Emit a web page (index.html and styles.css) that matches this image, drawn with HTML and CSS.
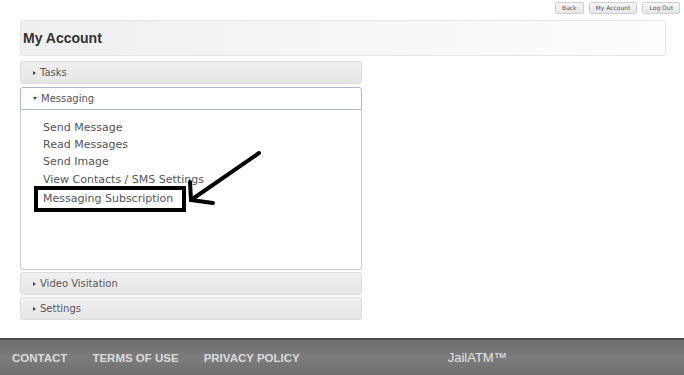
FILE: index.html
```html
<!DOCTYPE html>
<html>
<head>
<meta charset="utf-8">
<link rel="stylesheet" href="styles.css">
</head>
<body>
<div class="page">
  <div class="topbar">
    <button class="tbtn">Back</button>
    <button class="tbtn">My Account</button>
    <button class="tbtn">Log Out</button>
  </div>
  <div class="titlebox"><h1>My Account</h1></div>
  <div class="accordion">
    <div class="acc-head"><span class="tri-r"></span>Tasks</div>
    <div class="acc-head active"><span class="tri-d"></span>Messaging</div>
    <div class="acc-body">
      <a class="link">Send Message</a>
      <a class="link">Read Messages</a>
      <a class="link">Send Image</a>
      <a class="link">View Contacts / SMS Settings</a>
      <a class="link last">Messaging Subscription</a>
      <div class="mark-box"></div>
      <svg class="mark-arrow" width="100" height="80" viewBox="0 0 100 80">
        <line x1="88" y1="8" x2="20" y2="55" stroke="#000" stroke-width="4" stroke-linecap="round"/>
        <line x1="20" y1="55" x2="19" y2="37" stroke="#000" stroke-width="4" stroke-linecap="round"/>
        <line x1="20" y1="55" x2="42" y2="58" stroke="#000" stroke-width="4" stroke-linecap="round"/>
      </svg>
    </div>
    <div class="acc-head"><span class="tri-r"></span>Video Visitation</div>
    <div class="acc-head"><span class="tri-r"></span>Settings</div>
  </div>
  <footer class="footer">
    <a class="flink">CONTACT</a>
    <a class="flink">TERMS OF USE</a>
    <a class="flink">PRIVACY POLICY</a>
    <span class="brand">JailATM™</span>
  </footer>
</div>
</body>
</html>
```

FILE: styles.css
```css
html, body {
  margin: 0;
  padding: 0;
  background: #ffffff;
}
.page {
  display: flex;
  flex-direction: column;
  min-height: 100vh;
  font-family: "DejaVu Sans", Verdana, sans-serif;
}
.topbar {
  display: flex;
  justify-content: flex-end;
  gap: 5px;
  padding: 2px 4px 0 0;
  height: 14px;
}
.tbtn {
  font-family: "DejaVu Sans", sans-serif;
  font-size: 6px;
  color: #555;
  background: linear-gradient(#f6f6f6, #e6e6e6);
  border: 1px solid #cfcfcf;
  border-radius: 2px;
  padding: 0 6px;
  height: 12px;
  line-height: 10px;
}
.titlebox {
  margin: 4px 18px 0 20px;
  height: 36px;
  border: 1px solid #e4e4e4;
  border-radius: 3px;
  background: linear-gradient(90deg, #efefef, #f6f6f6 50%, #fdfdfd);
  display: flex;
  align-items: center;
  padding-left: 2px;
  box-sizing: border-box;
}
.titlebox h1 {
  margin: 0;
  font-family: "Liberation Sans", Arial, sans-serif;
  font-weight: bold;
  font-size: 14px;
  color: #333;
}
.accordion {
  width: 342px;
  margin: 5px 0 0 20px;
  display: flex;
  flex-direction: column;
}
.acc-head {
  height: 23px;
  box-sizing: border-box;
  border: 1px solid #dcdcdc;
  border-radius: 3px;
  background: linear-gradient(#f0f0f0, #e6e6e6);
  font-size: 10px;
  color: #555;
  display: flex;
  align-items: center;
  padding-left: 12px;
  margin-bottom: 2px;
}
.acc-head.active {
  background: #ffffff;
  border: 1px solid #aab8cc;
  border-radius: 3px 3px 0 0;
  margin-bottom: 0;
  margin-top: 1px;
}
.tri-r {
  width: 0;
  height: 0;
  border-top: 2.5px solid transparent;
  border-bottom: 2.5px solid transparent;
  border-left: 3px solid #444;
  margin-right: 4px;
}
.tri-d {
  width: 0;
  height: 0;
  border-left: 2.5px solid transparent;
  border-right: 2.5px solid transparent;
  border-top: 3px solid #444;
  margin-right: 4px;
}
.acc-body {
  position: relative;
  height: 160px;
  box-sizing: border-box;
  border: 1px solid #cccccc;
  border-top: none;
  border-radius: 0 0 3px 3px;
  background: #fff;
  padding: 9px 0 0 22px;
  display: flex;
  flex-direction: column;
  margin-bottom: 2px;
}
.link {
  font-size: 11px;
  line-height: 17.2px;
  color: #555;
}
.link.last {
  margin-top: 2px;
}
.mark-box {
  position: absolute;
  left: 13px;
  top: 76px;
  width: 152px;
  height: 26px;
  box-sizing: border-box;
  border: 4px solid #000;
}
.mark-arrow {
  position: absolute;
  left: 150px;
  top: 35px;
}
.footer {
  margin-top: auto;
  height: 37px;
  box-sizing: border-box;
  border-top: 2px solid #4a4a4a;
  background: linear-gradient(#6e6e6e, #7c7c7c 50%, #707070);
  display: flex;
  align-items: center;
  padding-left: 12px;
  font-family: "Liberation Sans", Arial, sans-serif;
}
.flink {
  font-size: 11.5px;
  font-weight: bold;
  color: #dcdcdc;
  margin-right: 25px;
}
.brand {
  margin-left: 123px;
  font-size: 13px;
  color: #e4e4e4;
}
```
